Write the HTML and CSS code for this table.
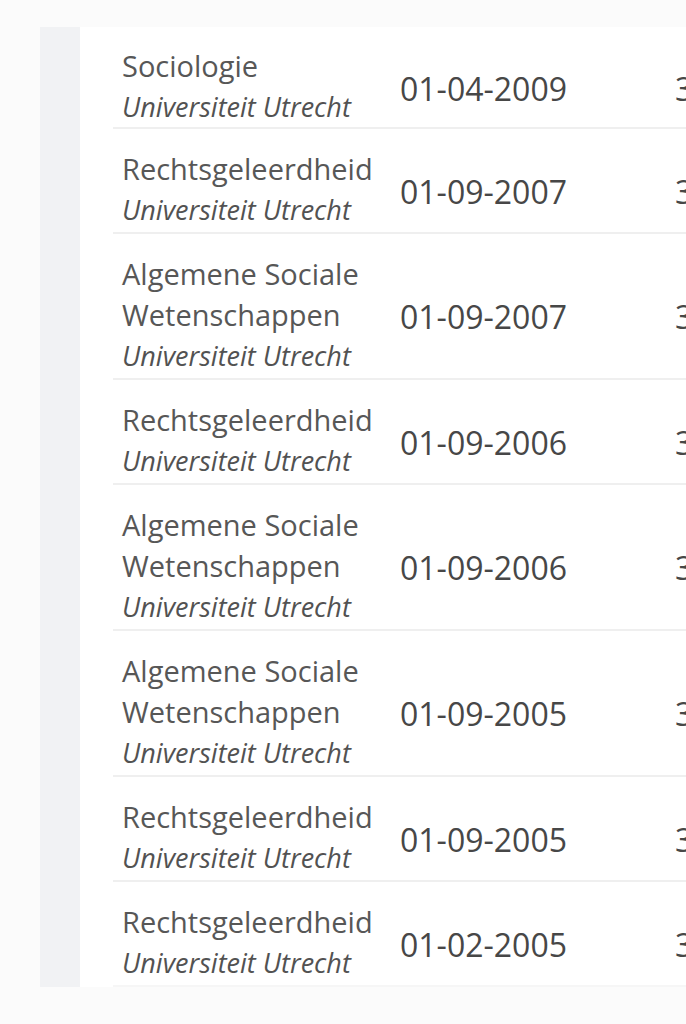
FILE: index.html
```html
<!DOCTYPE html>
<html lang="nl">
<head>
<meta charset="utf-8">
<title>Opleidingen</title>
<link rel="stylesheet" href="styles.css">
</head>
<body>
<div class="page">
  <div class="rail"></div>
  <div class="panel">
    <div class="row first">
      <div class="study"><div class="name">Sociologie</div><div class="inst">Universiteit Utrecht</div></div>
      <div class="date">01-04-2009</div>
      <div class="extra">3</div>
    </div>
    <div class="row">
      <div class="study"><div class="name">Rechtsgeleerdheid</div><div class="inst">Universiteit Utrecht</div></div>
      <div class="date">01-09-2007</div>
      <div class="extra">3</div>
    </div>
    <div class="row">
      <div class="study"><div class="name">Algemene Sociale Wetenschappen</div><div class="inst">Universiteit Utrecht</div></div>
      <div class="date">01-09-2007</div>
      <div class="extra">3</div>
    </div>
    <div class="row">
      <div class="study"><div class="name">Rechtsgeleerdheid</div><div class="inst">Universiteit Utrecht</div></div>
      <div class="date">01-09-2006</div>
      <div class="extra">3</div>
    </div>
    <div class="row">
      <div class="study"><div class="name">Algemene Sociale Wetenschappen</div><div class="inst">Universiteit Utrecht</div></div>
      <div class="date">01-09-2006</div>
      <div class="extra">3</div>
    </div>
    <div class="row">
      <div class="study"><div class="name">Algemene Sociale Wetenschappen</div><div class="inst">Universiteit Utrecht</div></div>
      <div class="date">01-09-2005</div>
      <div class="extra">3</div>
    </div>
    <div class="row">
      <div class="study"><div class="name">Rechtsgeleerdheid</div><div class="inst">Universiteit Utrecht</div></div>
      <div class="date">01-09-2005</div>
      <div class="extra">3</div>
    </div>
    <div class="row last">
      <div class="study"><div class="name">Rechtsgeleerdheid</div><div class="inst">Universiteit Utrecht</div></div>
      <div class="date">01-02-2005</div>
      <div class="extra">3</div>
    </div>
  </div>
</div>
</body>
</html>
```
FILE: styles.css
```css
html, body {
  margin: 0;
  padding: 0;
  overflow: hidden;
  background: #fbfbfb;
}
body {
  font-family: "Open Sans", "Noto Sans", sans-serif;
  color: #555;
}
.page {
  display: flex;
  margin-top: 27px;
  margin-left: 40px;
  width: 700px;
}
.rail {
  width: 40px;
  flex: none;
  background: #f1f2f4;
}
.panel {
  flex: 1;
  background: #fff;
  padding-left: 33px;
}
.row {
  display: flex;
  align-items: center;
  padding: 19px 0 2px 9px;
  border-bottom: 2px solid #efefef;
  white-space: nowrap;
}
.row.first {
  padding-top: 18px;
  padding-bottom: 0;
}
.row.last {
  border-bottom-color: #f6f6f6;
}
.study {
  width: 278px;
  flex: none;
  font-size: 29px;
  line-height: 41px;
  white-space: normal;
}
.name {
  color: #575757;
  width: 260px;
}
.inst {
  font-style: italic;
  font-size: 27px;
  color: #525252;
}
.date {
  width: 275px;
  flex: none;
  font-size: 32px;
  color: #474747;
  padding-top: 4px;
}
.extra {
  font-size: 32px;
  color: #474747;
  padding-top: 4px;
}
```
